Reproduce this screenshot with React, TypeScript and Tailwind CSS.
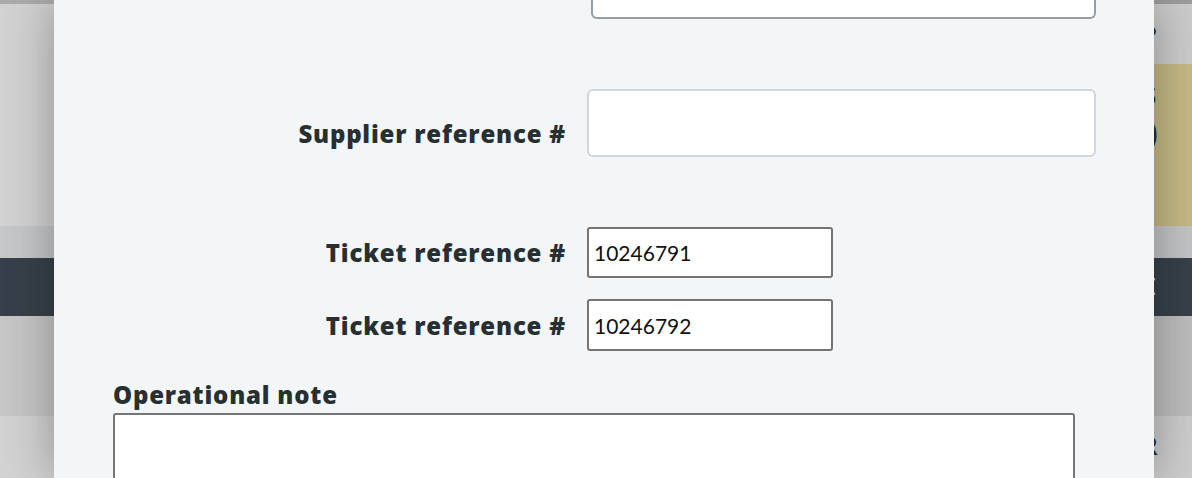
import React from 'react';

const label = "font-['Open_Sans',sans-serif] font-extrabold text-[24px] text-[#263032] leading-[29px] tracking-[0.8px]";
const digits = "font-['Lato',sans-serif] text-[21px] text-[#111] leading-none";

function LeftStrip() {
  return (
    <div className="flex w-[54px] shrink-0 flex-col overflow-hidden">
      <div className="h-[4px] shrink-0 bg-[#ababab]" />
      <div className="h-[222px] shrink-0 bg-[#d2d2d2]" />
      <div className="h-[32px] shrink-0 bg-[#c6c7c9]" />
      <div className="h-[58px] shrink-0 bg-[#37404a]" />
      <div className="h-[100px] shrink-0 bg-[#c6c6c6]" />
      <div className="flex-1 bg-[#d2d2d2]" />
    </div>
  );
}

function RightStrip() {
  return (
    <div className="flex min-w-0 flex-1 flex-col overflow-hidden font-['Lato',sans-serif] font-bold text-[#283033]">
      <div className="h-[4px] shrink-0 bg-[#9c9c9c]" />
      <div className="flex h-[60px] shrink-0 items-center bg-[#cbcbcb]">
        <span className="-ml-[9px] text-[18px] leading-none">P</span>
      </div>
      <div className="flex h-[162px] shrink-0 flex-col bg-[#c4b884]">
        <span className="-ml-[11px] mt-[20px] text-[24px] leading-none">S</span>
        <span className="-ml-[22px] mt-[4px] text-[44px] leading-none">0</span>
        <span className="-ml-[13px] mt-[22px] text-[24px] leading-none">L</span>
      </div>
      <div className="h-[32px] shrink-0 bg-[#c2c3c5]" />
      <div className="flex h-[58px] shrink-0 items-center bg-[#37404a]">
        <span className="-ml-[11px] text-[22px] leading-none text-[#d8dbde]">E</span>
      </div>
      <div className="h-[100px] shrink-0 bg-[#bcbcbc]" />
      <div className="flex flex-1 items-start bg-[#cccccc]">
        <span className="-ml-[12px] mt-[18px] text-[24px] leading-none">R</span>
      </div>
    </div>
  );
}

export default function App() {
  return (
    <div className="flex h-[478px] w-[1192px] overflow-hidden">
      <LeftStrip />
      <div className="relative z-10 flex w-[1100px] shrink-0 flex-col overflow-hidden bg-[#f4f5f7] shadow-[0_0_45px_rgba(0,0,0,0.32)]">
        <div className="ml-[537px] h-[19px] w-[505px] shrink-0 rounded-b-[6px] border-x-2 border-b-2 border-[#979ea3] bg-white" />

        <div className="mt-[70px] flex shrink-0 items-start gap-[21px]">
          <div className={`${label} mt-[30px] w-[512px] text-right`}>Supplier reference #</div>
          <div className="h-[68px] w-[509px] rounded-[6px] border-2 border-[#d3d7da] bg-white" />
        </div>

        <div className="mt-[70px] flex shrink-0 items-center gap-[21px]">
          <div className={`${label} w-[512px] text-right`}>Ticket reference #</div>
          <div className="flex h-[51px] w-[246px] items-center rounded-[3px] border-2 border-[#747474] bg-white px-[5px]">
            <span className={digits}>10246791</span>
          </div>
        </div>

        <div className="mt-[21px] flex shrink-0 items-center gap-[21px]">
          <div className={`${label} w-[512px] text-right`}>Ticket reference #</div>
          <div className="flex h-[52px] w-[246px] items-center rounded-[3px] border-2 border-[#747474] bg-white px-[5px]">
            <span className={digits}>10246792</span>
          </div>
        </div>

        <div className="shrink-0 px-[59px] pt-[29px]">
          <div className={label}>Operational note</div>
          <div className="mt-[4px] h-[80px] w-[962px] rounded-[3px] border-2 border-[#767676] bg-white" />
        </div>
      </div>
      <RightStrip />
    </div>
  );
}
